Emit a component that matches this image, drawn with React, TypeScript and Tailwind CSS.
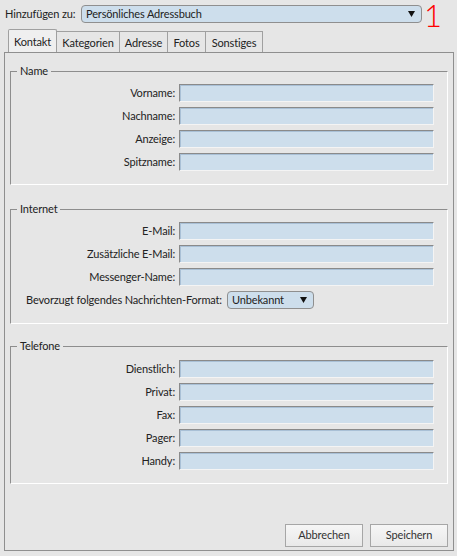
import React from "react";

const Field = () => (
  <div className="h-[18px] bg-[#cddeec] border-t border-l border-t-[#8a8a8a] border-l-[#8a8a8a] border-r border-b border-r-[#f4f4f4] border-b-[#f4f4f4] shadow-[inset_1px_1px_0_#a9c0d6]" />
);

const Rows = ({ labels }: { labels: string[] }) => (
  <div className="grid grid-cols-[164px_255px] gap-x-[4px] gap-y-[5px] items-center">
    {labels.map((l) => (
      <React.Fragment key={l}>
        <div className="text-right leading-[18px] whitespace-nowrap">{l}</div>
        <Field />
      </React.Fragment>
    ))}
  </div>
);

const Group = ({
  title,
  className,
  children,
}: {
  title: string;
  className: string;
  children: React.ReactNode;
}) => (
  <div
    className={
      "relative border-t border-l border-t-[#8d8d8d] border-l-[#8d8d8d] border-r border-b border-r-white border-b-white " +
      className
    }
  >
    <span className="absolute -top-[8px] left-[6px] px-[3px] bg-[#e6e6e6] leading-[14px]">{title}</span>
    {children}
  </div>
);

const Arrow = () => (
  <svg width="7" height="6" viewBox="0 0 7 6">
    <polygon points="0,0 7,0 3.5,6" fill="#111" />
  </svg>
);

export default function App() {
  const tabs = [
    { t: "Kontakt", w: "w-[49px]" },
    { t: "Kategorien", w: "w-[63px]" },
    { t: "Adresse", w: "w-[48px]" },
    { t: "Fotos", w: "w-[38px]" },
    { t: "Sonstiges", w: "w-[57px]" },
  ];
  return (
    <div className="w-[457px] h-[556px] bg-[#e6e6e6] font-[Lato,sans-serif] text-[11px] tracking-[-0.15px] text-[#222] overflow-hidden">
      {/* top row */}
      <div className="h-[29px] flex items-start pt-[5px] pl-[5px]">
        <span className="leading-[18px] w-[76px]">Hinzufügen zu:</span>
        <div className="w-[341px] h-[18px] rounded-[4px] border border-[#8f8f8f] bg-[#cddeec] flex items-center justify-between pl-[4px] pr-[6px]">
          <span className="leading-[16px]">Persönliches Adressbuch</span>
          <Arrow />
        </div>
        <span className="ml-[1px] -mt-[4px] px-[1px] font-[Lato,sans-serif] font-light tracking-normal text-[31px] leading-[28px] text-[#ff0000]">1</span>
      </div>
      {/* tabs */}
      <div className="h-[23px] flex items-end pl-[8px]">
        {tabs.map((tab, i) => (
          <div
            key={tab.t}
            className={
              (i === 0
                ? "h-[23px] bg-[#efefef] border-l rounded-t-[2px] "
                : "h-[21px] bg-[#e6e6e6] ") +
              tab.w +
              " border-t border-r border-[#a0a0a0] flex items-center justify-center leading-[14px] pt-[1px]"
            }
          >
            {tab.t}
          </div>
        ))}
      </div>
      {/* panel */}
      <div className="ml-[4px] w-[450px] h-[499px] border border-[#8f8f8f] px-[5px] pb-[3px] flex flex-col">
        <Group title="Name" className="mt-[18px] pt-[12px] pb-[13px]">
          <Rows labels={["Vorname:", "Nachname:", "Anzeige:", "Spitzname:"]} />
        </Group>
        <Group title="Internet" className="mt-[24px] pt-[12px] pb-[14px]">
          <Rows labels={["E-Mail:", "Zusätzliche E-Mail:", "Messenger-Name:"]} />
          <div className="mt-[5px] pl-[15px] flex items-center h-[18px]">
            <span className="whitespace-nowrap w-[196px]">Bevorzugt folgendes Nachrichten-Format:</span>
            <div className="ml-[5px] w-[87px] h-[18px] rounded-[4px] border border-[#8f8f8f] bg-[#cddeec] flex items-center justify-between pl-[4px] pr-[6px]">
              <span className="leading-[16px]">Unbekannt</span>
              <Arrow />
            </div>
          </div>
        </Group>
        <Group title="Telefone" className="mt-[22px] pt-[13px] pb-[13px]">
          <Rows labels={["Dienstlich:", "Privat:", "Fax:", "Pager:", "Handy:"]} />
        </Group>
        <div className="mt-auto flex justify-end gap-[7px]">
          <button className="w-[78px] h-[23px] border border-[#a6a6a6] bg-gradient-to-b from-[#f6f6f6] to-[#e9e9e9] text-[#333]">
            Abbrechen
          </button>
          <button className="w-[78px] h-[23px] border border-[#a6a6a6] bg-gradient-to-b from-[#f6f6f6] to-[#e9e9e9] text-[#333]">
            Speichern
          </button>
        </div>
      </div>
    </div>
  );
}
